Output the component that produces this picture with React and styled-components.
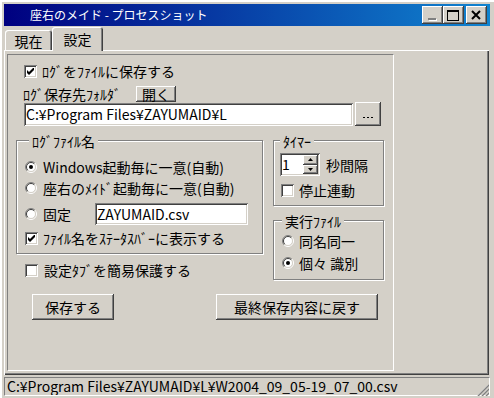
import styled, { createGlobalStyle } from "styled-components";

const GlobalStyle = createGlobalStyle`
    html, body {
        margin: 0;
        padding: 0;
        background: #d4d0c8;
        overflow: hidden;
    }
    body {
        font-family: "Noto Sans CJK JP", "Noto Sans", sans-serif;
        font-size: 14px;
        color: #000;
    }
`;

const raised = `
    box-shadow: inset -1px -1px #404040, inset 1px 1px #fff, inset -2px -2px #808080;
`;

const sunken = `
    box-shadow: inset 1px 1px #808080, inset -1px -1px #fff, inset 2px 2px #404040, inset -2px -2px #d4d0c8;
`;

const Window = styled.div`
    width: 494px;
    height: 398px;
    box-sizing: border-box;
    padding: 4px 4px 0 4px;
    background: #d4d0c8;
    box-shadow: inset 2px 2px #fff;
    display: flex;
    flex-direction: column;
    overflow: hidden;
`;

const TitleBar = styled.div`
    height: 22px;
    flex: none;
    display: flex;
    align-items: flex-start;
    background: linear-gradient(to right, #000080, #1084d0);
`;

const TitleText = styled.div`
    flex: 1;
    padding-left: 26px;
    color: #fff;
    font-size: 12px;
    line-height: 22px;
    white-space: nowrap;
`;

const CaptionButtons = styled.div`
    display: flex;
    padding: 2px 3px 0 0;
`;

const CapBtn = styled.div`
    width: 21px;
    height: 18px;
    margin-left: ${p => (p.$gap ? 2 : 0)}px;
    background: #d4d0c8;
    ${raised}
`;

const TabStrip = styled.div`
    height: 24px;
    flex: none;
    display: flex;
    align-items: flex-end;
    padding-left: 1px;
    position: relative;
    z-index: 1;
`;

const Tab = styled.div`
    box-sizing: border-box;
    width: ${p => (p.$active ? 51 : 47)}px;
    height: ${p => (p.$active ? 24 : 20)}px;
    margin-bottom: ${p => (p.$active ? -1 : 0)}px;
    padding-top: ${p => (p.$active ? 0 : 1)}px;
    background: #d4d0c8;
    border-radius: 3px 3px 0 0;
    box-shadow: inset 1px 1px #fff, inset -1px 0 #404040, inset -2px 0 #808080;
    display: flex;
    align-items: center;
    justify-content: center;
    line-height: 16px;
`;

const TabBody = styled.div`
    flex: none;
    height: 325px;
    margin-right: 1px;
    box-sizing: border-box;
    padding: 4px 0 0 3px;
    background: #d4d0c8;
    box-shadow: inset 1px 1px #fff, inset -1px -1px #404040, inset -2px -2px #808080;
`;

const Panel = styled.div`
    width: 387px;
    height: 317px;
    box-sizing: border-box;
    border: 1px solid;
    border-color: #808080 #fff #fff #808080;
    display: flex;
    flex-direction: column;
`;

const Row = styled.div`
    flex: none;
    display: flex;
    align-items: center;
    height: ${p => p.$h || 20}px;
    margin-top: ${p => p.$mt || 0}px;
    padding-left: ${p => p.$pl || 0}px;
    gap: ${p => p.$gap || 0}px;
`;

const Text = styled.span`
    white-space: nowrap;
    line-height: 16px;
    width: ${p => (p.$w ? `${p.$w}px` : "auto")};
    flex: none;
`;

const Box = styled.span`
    width: 13px;
    height: 13px;
    flex: none;
    box-sizing: border-box;
    background: #fff;
    display: flex;
    align-items: center;
    justify-content: center;
    ${sunken}
`;

const Edit = styled.div`
    width: ${p => p.$w}px;
    height: ${p => p.$h}px;
    flex: none;
    box-sizing: border-box;
    padding: 0 2px;
    background: #fff;
    display: flex;
    align-items: center;
    white-space: nowrap;
    overflow: hidden;
    line-height: 16px;
    ${sunken}
`;

const Button = styled.div`
    width: ${p => p.$w}px;
    height: ${p => p.$h}px;
    flex: none;
    margin-left: ${p => p.$ml || 0}px;
    box-sizing: border-box;
    background: #d4d0c8;
    display: flex;
    align-items: center;
    justify-content: center;
    white-space: nowrap;
    line-height: 16px;
    ${raised}
`;

const GroupsRow = styled.div`
    flex: none;
    display: flex;
    align-items: flex-start;
    gap: 10px;
    margin-top: 14px;
    padding-left: 8px;
`;

const Column = styled.div`
    display: flex;
    flex-direction: column;
    width: ${p => p.$w}px;
`;

const GroupBox = styled.div`
    box-sizing: border-box;
    width: ${p => p.$w}px;
    margin-top: ${p => p.$mt || 0}px;
    padding-bottom: ${p => p.$pb}px;
    border: 1px solid #808080;
    box-shadow: inset 1px 1px #fff, 1px 1px #fff;
    display: flex;
    flex-direction: column;
`;

const GroupTitle = styled.span`
    align-self: flex-start;
    height: 14px;
    line-height: 14px;
    margin: -7px 0 0 ${p => p.$ml}px;
    padding: 0 3px;
    background: #d4d0c8;
    white-space: nowrap;
`;

const Spin = styled.div`
    width: 40px;
    height: 23px;
    flex: none;
    box-sizing: border-box;
    padding: 2px;
    background: #fff;
    display: flex;
    ${sunken}
`;

const SpinValue = styled.div`
    flex: 1;
    line-height: 19px;
`;

const SpinButtons = styled.div`
    width: 15px;
    display: flex;
    flex-direction: column;
`;

const SpinBtn = styled.div`
    flex: 1;
    background: #d4d0c8;
    display: flex;
    align-items: center;
    justify-content: center;
    ${raised}
`;

const StatusBar = styled.div`
    height: 23px;
    flex: none;
    box-sizing: border-box;
    padding: 2px 0;
    display: flex;
    position: relative;
`;

const StatusPane = styled.div`
    flex: 1;
    border: 1px solid;
    border-color: #808080 #fff #fff #808080;
    padding-left: 2px;
    line-height: 17px;
    white-space: nowrap;
    overflow: hidden;
`;

const Grip = styled.svg`
    position: absolute;
    right: 1px;
    bottom: 2px;
`;

const Check = ({ on }) => (
    <Box>
        {on && (
            <svg width="7" height="7" viewBox="0 0 7 7">
                <path d="M0 2 L2 4 L6 0 L7 0 L7 2 L2 7 L0 5 Z" fill="#000" />
            </svg>
        )}
    </Box>
);

const Radio = ({ on }) => (
    <svg width="12" height="12" viewBox="0 0 12 12" style={{ flex: "none" }}>
        <circle cx="6" cy="6" r="4.5" fill="#fff" />
        <path d="M2.1 9.9A5.5 5.5 0 0 1 9.9 2.1" stroke="#808080" fill="none" />
        <path d="M9.9 2.1A5.5 5.5 0 0 1 2.1 9.9" stroke="#fff" fill="none" />
        <path d="M2.8 9.2A4.5 4.5 0 0 1 9.2 2.8" stroke="#404040" fill="none" />
        <path d="M9.2 2.8A4.5 4.5 0 0 1 2.8 9.2" stroke="#d4d0c8" fill="none" />
        {on && <circle cx="6" cy="6" r="2" fill="#000" />}
    </svg>
);

const App = () => {
    return (
        <>
            <GlobalStyle />
            <Window>
                <TitleBar>
                    <TitleText>座右のメイド - プロセスショット</TitleText>
                    <CaptionButtons>
                        <CapBtn>
                            <svg width="21" height="18">
                                <rect x="7" y="13" width="8" height="2" fill="#fff" />
                                <rect x="6" y="12" width="8" height="2" fill="#808080" />
                            </svg>
                        </CapBtn>
                        <CapBtn>
                            <svg width="21" height="18">
                                <rect x="4.5" y="4.5" width="11" height="10" fill="none" stroke="#000" />
                                <rect x="4" y="4" width="12" height="2" fill="#000" />
                            </svg>
                        </CapBtn>
                        <CapBtn $gap>
                            <svg width="21" height="18">
                                <path d="M6 5 L14 13 M14 5 L6 13" stroke="#000" strokeWidth="2" />
                            </svg>
                        </CapBtn>
                    </CaptionButtons>
                </TitleBar>

                <TabStrip>
                    <Tab>現在</Tab>
                    <Tab $active>設定</Tab>
                </TabStrip>

                <TabBody>
                    <Panel>
                        <Row $h={16} $mt={8} $pl={16} $gap={5}>
                            <Check on />
                            <Text>ﾛｸﾞをﾌｧｲﾙに保存する</Text>
                        </Row>

                        <Row $h={16} $mt={7} $pl={15}>
                            <Text $w={113}>ﾛｸﾞ保存先ﾌｫﾙﾀﾞ</Text>
                            <Button $w={40} $h={16}>開く</Button>
                        </Row>

                        <Row $h={24} $pl={16} $gap={2}>
                            <Edit $w={329} $h={23}>C:¥Program Files¥ZAYUMAID¥L</Edit>
                            <Button $w={26} $h={24}>
                                <svg width="10" height="4" style={{ marginTop: 6 }}>
                                    <rect x="0" y="2" width="2" height="1" fill="#000" />
                                    <rect x="4" y="2" width="2" height="1" fill="#000" />
                                    <rect x="8" y="2" width="2" height="1" fill="#000" />
                                </svg>
                            </Button>
                        </Row>

                        <GroupsRow>
                            <Column $w={247}>
                                <GroupBox $w={247} $pb={5}>
                                    <GroupTitle $ml={12}>ﾛｸﾞﾌｧｲﾙ名</GroupTitle>
                                    <Row $mt={9} $pl={8} $gap={6}>
                                        <Radio on />
                                        <Text>Windows起動毎に一意(自動)</Text>
                                    </Row>
                                    <Row $mt={1} $pl={8} $gap={6}>
                                        <Radio />
                                        <Text>座右のﾒｲﾄﾞ起動毎に一意(自動)</Text>
                                    </Row>
                                    <Row $h={23} $mt={4} $pl={8} $gap={6}>
                                        <Radio />
                                        <Text $w={46}>固定</Text>
                                        <Edit $w={153} $h={22}>ZAYUMAID.csv</Edit>
                                    </Row>
                                    <Row $mt={3} $pl={8} $gap={5}>
                                        <Check on />
                                        <Text>ﾌｧｲﾙ名をｽﾃｰﾀｽﾊﾞｰに表示する</Text>
                                    </Row>
                                </GroupBox>
                                <Row $mt={6} $pl={9} $gap={6}>
                                    <Check />
                                    <Text>設定ﾀﾌﾞを簡易保護する</Text>
                                </Row>
                            </Column>

                            <Column $w={111}>
                                <GroupBox $w={111} $pb={5}>
                                    <GroupTitle $ml={6}>ﾀｲﾏｰ</GroupTitle>
                                    <Row $h={23} $mt={5} $pl={6} $gap={6}>
                                        <Spin>
                                            <SpinValue>1</SpinValue>
                                            <SpinButtons>
                                                <SpinBtn>
                                                    <svg width="5" height="3"><path d="M2.5 0 L5 3 L0 3 Z" fill="#000" /></svg>
                                                </SpinBtn>
                                                <SpinBtn>
                                                    <svg width="5" height="3"><path d="M0 0 L5 0 L2.5 3 Z" fill="#000" /></svg>
                                                </SpinBtn>
                                            </SpinButtons>
                                        </Spin>
                                        <Text>秒間隔</Text>
                                    </Row>
                                    <Row $mt={4} $pl={7} $gap={5}>
                                        <Check />
                                        <Text>停止連動</Text>
                                    </Row>
                                </GroupBox>

                                <GroupBox $w={111} $mt={14} $pb={6}>
                                    <GroupTitle $ml={8}>実行ﾌｧｲﾙ</GroupTitle>
                                    <Row $mt={3} $pl={8} $gap={5}>
                                        <Radio />
                                        <Text>同名同一</Text>
                                    </Row>
                                    <Row $mt={2} $pl={8} $gap={5}>
                                        <Radio on />
                                        <Text>個々 識別</Text>
                                    </Row>
                                </GroupBox>
                            </Column>
                        </GroupsRow>

                        <Row $h={26} $mt={14}>
                            <Button $w={82} $h={26} $ml={24}>保存する</Button>
                            <Button $w={162} $h={26} $ml={102}>最終保存内容に戻す</Button>
                        </Row>
                    </Panel>
                </TabBody>

                <StatusBar>
                    <StatusPane>C:¥Program Files¥ZAYUMAID¥L¥W2004_09_05-19_07_00.csv</StatusPane>
                    <Grip width="12" height="12" viewBox="0 0 12 12">
                        <path d="M11 1 L1 11 M11 5 L5 11 M11 9 L9 11" stroke="#fff" />
                        <path d="M12 1 L1 12 M12 5 L5 12 M12 9 L9 12" stroke="#808080" strokeWidth="1.5" />
                    </Grip>
                </StatusBar>
            </Window>
        </>
    );
};

export default App;
